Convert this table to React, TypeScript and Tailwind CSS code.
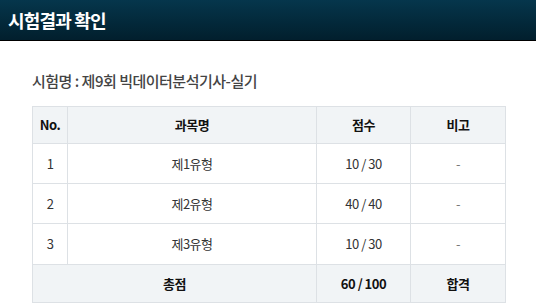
import React from 'react';

const rows = [
  { no: 1, name: '제1유형', score: '10 / 30', note: '-', h: 'h-[40px]' },
  { no: 2, name: '제2유형', score: '40 / 40', note: '-', h: 'h-[40px]' },
  { no: 3, name: '제3유형', score: '10 / 30', note: '-', h: 'h-[41px]' },
];

export default function App() {
  return (
    <div className="min-h-[307px] w-[536px] bg-white font-['Noto_Sans_CJK_KR','Noto_Sans',sans-serif]">
      {/* 상단 타이틀 바 */}
      <div className="flex h-[41px] items-center border-b border-black bg-gradient-to-b from-[#05364c] to-[#021f2d] px-[8px]">
        <h1 className="text-[18px] font-bold tracking-[-0.8px] text-white">시험결과 확인</h1>
      </div>

      <div className="px-[32px] pt-[29px]">
        <p className="h-[22px] text-[15px] leading-[22px] font-medium tracking-[-0.5px] text-[#444]">
          시험명 : 제9회 빅데이터분석기사-실기
        </p>

        <table className="mt-[14px] w-[474px] border-collapse text-[13px] tracking-[-0.5px] text-[#333]">
          <thead>
            <tr className="h-[37px] bg-[#f1f4f6] font-bold text-[#111]">
              <th className="w-[35px] border border-[#dde1e5]">No.</th>
              <th className="w-[249px] border border-[#dde1e5]">과목명</th>
              <th className="w-[94px] border border-[#dde1e5]">점수</th>
              <th className="border border-[#dde1e5]">비고</th>
            </tr>
          </thead>
          <tbody>
            {rows.map((r) => (
              <tr key={r.no} className={`${r.h} text-center`}>
                <td className="border border-[#dde1e5]">{r.no}</td>
                <td className="border border-[#dde1e5]">{r.name}</td>
                <td className="border border-[#dde1e5]">{r.score}</td>
                <td className="border border-[#dde1e5] text-[#777]">{r.note}</td>
              </tr>
            ))}
            <tr className="h-[38px] bg-[#f1f4f6] text-center font-bold text-[#111]">
              <td colSpan={2} className="border border-[#dde1e5]">총점</td>
              <td className="border border-[#dde1e5]">60 / 100</td>
              <td className="border border-[#dde1e5]">합격</td>
            </tr>
          </tbody>
        </table>
      </div>
    </div>
  );
}
